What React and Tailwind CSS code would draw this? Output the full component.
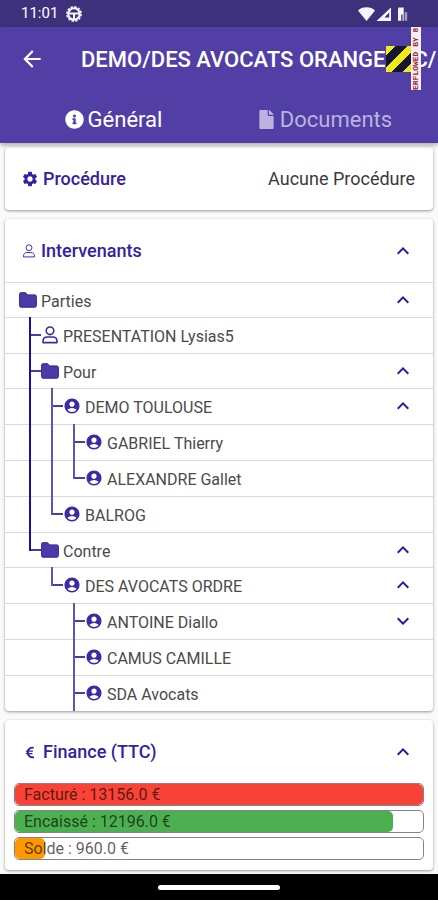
import React, { useState } from 'react';
import {
    MdAccountCircle,
    MdArrowBack,
    MdKeyboardArrowDown,
    MdKeyboardArrowUp,
    MdSettings,
} from 'react-icons/md';
import { FaEuroSign, FaFile, FaInfoCircle } from 'react-icons/fa';

// guides: one entry per indent level
//   line = passes through, tee = passes through with a branch, end = last branch, none = blank
const parties = [
    { label: 'Parties', type: 'folder', guides: [], toggle: 'up' },
    { label: 'PRESENTATION Lysias5', type: 'user', guides: ['tee'] },
    { label: 'Pour', type: 'folder', guides: ['tee'], toggle: 'up' },
    { label: 'DEMO TOULOUSE', type: 'account', guides: ['line', 'tee'], toggle: 'up' },
    { label: 'GABRIEL Thierry', type: 'account', guides: ['line', 'line', 'tee'] },
    { label: 'ALEXANDRE Gallet', type: 'account', guides: ['line', 'line', 'end'] },
    { label: 'BALROG', type: 'account', guides: ['line', 'end'] },
    { label: 'Contre', type: 'folder', guides: ['end'], toggle: 'up' },
    { label: 'DES AVOCATS ORDRE', type: 'account', guides: ['none', 'end'], toggle: 'up' },
    { label: 'ANTOINE Diallo', type: 'account', guides: ['none', 'none', 'tee'], toggle: 'down' },
    { label: 'CAMUS CAMILLE', type: 'account', guides: ['none', 'none', 'tee'] },
    { label: 'SDA Avocats', type: 'account', guides: ['none', 'none', 'tee'] },
];

const finances = [
    { label: 'Facturé', amount: 13156, color: 'bg-[#f94336]' },
    { label: 'Encaissé', amount: 12196, color: 'bg-[#4caf50]' },
    { label: 'Solde', amount: 960, color: 'bg-[#ff9800]' },
];

function FolderIcon() {
    return (
        <svg viewBox="0 0 18 16" className="h-4 w-[18px] shrink-0" fill="#4c3ba6" stroke="#35229c" strokeLinejoin="round">
            <path d="M.6 2.2Q.6.7 2 .7h4.2q.8 0 1.3.8l.9 1.4h7.4q1.6 0 1.6 1.5v9.2q0 1.6-1.6 1.6H2q-1.4 0-1.4-1.6z" />
        </svg>
    );
}

function UserIcon({ className, strokeWidth }) {
    return (
        <svg viewBox="0 0 16 18" className={className} fill="none" stroke="currentColor" strokeWidth={strokeWidth}>
            <circle cx="8" cy="4.8" r="3.8" />
            <path d="M1 16.6v-1.4c0-2.6 1.8-4.2 4.4-4.2h5.2c2.6 0 4.4 1.6 4.4 4.2v1.4z" strokeLinejoin="round" />
        </svg>
    );
}

function StatusBar() {
    return (
        <div className="flex h-[27px] items-center justify-between bg-[#3e317c] pl-[21px] pr-[28px] text-white">
            <div className="flex items-center gap-2">
                <span className="text-[15px]">11:01</span>
                <svg viewBox="0 0 16 16" className="size-4" fill="none" stroke="#f6f4ff">
                    <circle cx="8" cy="8" r="7.1" strokeWidth="1.6" strokeDasharray="2.4 1.32" />
                    <circle cx="8" cy="8" r="5.7" strokeWidth="2" />
                    <path d="M3 7.4h10M8 7.4V13" strokeWidth="2" />
                </svg>
            </div>
            <svg viewBox="0 0 52 16" className="h-4 w-[52px]" fill="#f6f4ff">
                <path d="M0 4.6C2.3 2.2 5 1.2 8.5 1.2s6.2 1 8.5 3.4L8.5 15z" />
                <path d="M33 1.5V15H18.5zM31.2 6.4l-4.8 5.2h4.8z" fillRule="evenodd" />
                <path d="M40.5 1.5h5.2v13.2h-5.7V3.6z" />
                <path d="M46.6 6.2h2.6v8.5h-2.6z" opacity=".55" />
                <path d="M43.2 8.6h1.4v6.1h-1.4z" fill="#3e317c" />
            </svg>
        </div>
    );
}

function TopBar() {
    return (
        <div className="relative flex h-16 items-center overflow-hidden pl-[19px]">
            <button type="button" aria-label="Retour" className="w-[62px] shrink-0">
                <MdArrowBack size={26} />
            </button>
            <h1 className="flex shrink-0 items-center whitespace-nowrap text-[22px] font-medium">
                DEMO/DES AVOCATS ORANGE
                <span className="h-[26px] w-[28px] bg-[repeating-linear-gradient(135deg,#f2e91c_0_7px,#17172b_7px_15px)]" />
                C/
            </h1>
            <div className="absolute right-[17px] top-0 flex h-[63px] w-[10px] rotate-180 items-center justify-center overflow-hidden bg-[#f6eff3] font-['Liberation_Mono'] text-[8px] font-bold leading-[10px] text-[#a02840] [writing-mode:vertical-rl]">
                <span className="whitespace-nowrap">ERFLOWED BY 8</span>
            </div>
        </div>
    );
}

function Tabs() {
    const [tab, setTab] = useState('general');
    const color = (id) => (tab === id ? 'text-white' : 'text-[#bbb3de]');

    return (
        <nav className="grid h-[52px] grid-cols-2 px-2 pt-1 text-[22px]">
            <button
                type="button"
                onClick={() => setTab('general')}
                className={`flex items-center justify-center gap-1 ${color('general')}`}
            >
                <FaInfoCircle size={19} />
                Général
            </button>
            <button
                type="button"
                onClick={() => setTab('documents')}
                className={`flex items-center justify-center gap-1 ${color('documents')}`}
            >
                <FaFile size={19} />
                Documents
            </button>
        </nav>
    );
}

function Card({ children }) {
    return (
        <section className="overflow-hidden rounded-[4px] bg-white shadow-[0_1px_3px_rgba(0,0,0,0.4)]">
            {children}
        </section>
    );
}

function CardHeader({ icon, title, children }) {
    return (
        <div className="flex h-[63px] items-center justify-between pl-4 pr-[18px] pt-px">
            <h2 className="flex items-center gap-1 text-lg font-medium text-[#3520a0]">
                {icon}
                {title}
            </h2>
            {children}
        </div>
    );
}

function Toggle({ direction, label }) {
    const Icon = direction === 'up' ? MdKeyboardArrowUp : MdKeyboardArrowDown;
    return (
        <button type="button" aria-label={label} className="text-[#2c1a9c]">
            <Icon size={24} />
        </button>
    );
}

function Guide({ kind, level }) {
    const color = level === 0 ? 'bg-[#1c0f9e]' : 'bg-[#6153b4]';
    if (kind === 'none') return <div className="w-[22px]" />;
    return (
        <div className="flex w-[22px] items-center self-stretch pl-[10px]">
            <div className={`w-[2px] self-start ${kind === 'end' ? 'h-[19px]' : 'h-full'} ${color}`} />
            {kind !== 'line' && <div className="h-[2px] flex-1 bg-[#4b3aac]" />}
        </div>
    );
}

function NodeIcon({ type }) {
    if (type === 'folder') return <FolderIcon />;
    if (type === 'user') return <UserIcon className="h-[18px] w-4" strokeWidth={1.6} />;
    return <MdAccountCircle size={18} />;
}

function TreeRow({ node }) {
    return (
        <li
            className={`flex items-center pl-[14px] pr-[18px] shadow-[inset_0_1px_#d9d9d9] ${node.type === 'folder' ? 'h-[35px]' : 'h-9'}`}
        >
            {node.guides.map((kind, i) => (
                <Guide key={i} kind={kind} level={i} />
            ))}
            <span className="flex w-[18px] justify-center text-[#3d2aa3]">
                <NodeIcon type={node.type} />
            </span>
            <span className="flex-1 pl-1 pt-1 text-base text-[#4a4a4a]">{node.label}</span>
            {node.toggle && <Toggle direction={node.toggle} label={node.label} />}
        </li>
    );
}

function FinanceBar({ item, total }) {
    return (
        <div className="relative h-[23px] overflow-hidden rounded-[5px] border border-[#858585] bg-white">
            <div
                className={`h-full rounded-[5px] ${item.color}`}
                style={{ width: `${(item.amount / total) * 100}%` }}
            />
            <span className="absolute inset-0 flex items-center pl-[9px] text-base text-black/65">
                {item.label} : {item.amount.toFixed(1)} €
            </span>
        </div>
    );
}

export default function App() {
    return (
        <div className="flex min-h-screen flex-col overflow-hidden bg-[#fafafa] font-[Roboto,sans-serif]">
            <StatusBar />
            <header className="z-10 bg-[#513fa6] text-white shadow-[0_2px_5px_rgba(0,0,0,0.35)]">
                <TopBar />
                <Tabs />
            </header>

            <main className="flex flex-1 flex-col gap-[9px] px-[5px] pb-1 pt-1">
                <Card>
                    <CardHeader icon={<MdSettings size={18} />} title="Procédure">
                        <span className="text-lg text-[#3a3a3a]">Aucune Procédure</span>
                    </CardHeader>
                </Card>

                <Card>
                    <CardHeader icon={<UserIcon className="h-[14px] w-4" strokeWidth={1.2} />} title="Intervenants">
                        <Toggle direction="up" label="Intervenants" />
                    </CardHeader>
                    <ul>
                        {parties.map((node) => (
                            <TreeRow key={node.label} node={node} />
                        ))}
                    </ul>
                </Card>

                <Card>
                    <CardHeader icon={<FaEuroSign size={13} className="w-[18px]" />} title="Finance (TTC)">
                        <Toggle direction="up" label="Finance" />
                    </CardHeader>
                    <div className="flex flex-col gap-1 px-[9px] pb-[10px]">
                        {finances.map((item) => (
                            <FinanceBar key={item.label} item={item} total={finances[0].amount} />
                        ))}
                    </div>
                </Card>
            </main>

            <footer className="flex h-[26px] items-center justify-center bg-black">
                <div className="h-[5px] w-[122px] rounded-full bg-white" />
            </footer>
        </div>
    );
}
